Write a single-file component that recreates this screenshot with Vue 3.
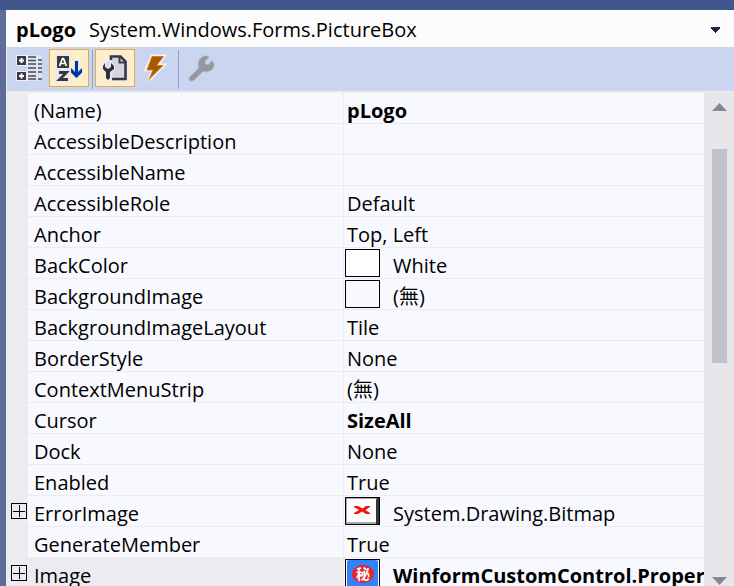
<script setup>
import { ref } from 'vue'

const sortMode = ref('alpha')

const rows = [
  { name: '(Name)', value: 'pLogo', bold: true },
  { name: 'AccessibleDescription', value: '' },
  { name: 'AccessibleName', value: '' },
  { name: 'AccessibleRole', value: 'Default' },
  { name: 'Anchor', value: 'Top, Left' },
  { name: 'BackColor', value: 'White', preview: 'white' },
  { name: 'BackgroundImage', value: '(無)', preview: 'empty' },
  { name: 'BackgroundImageLayout', value: 'Tile' },
  { name: 'BorderStyle', value: 'None' },
  { name: 'ContextMenuStrip', value: '(無)' },
  { name: 'Cursor', value: 'SizeAll', bold: true },
  { name: 'Dock', value: 'None' },
  { name: 'Enabled', value: 'True' },
  { name: 'ErrorImage', value: 'System.Drawing.Bitmap', preview: 'error', expandable: true },
  { name: 'GenerateMember', value: 'True' },
  { name: 'Image', value: 'WinformCustomControl.Propert', bold: true, preview: 'logo', expandable: true, selected: true }
]
</script>

<template>
  <main class="window">
    <div class="frame-top"></div>
    <div class="frame-left"></div>
    <section class="panel">
      <header class="object-bar">
        <strong>pLogo</strong>
        <span class="type">System.Windows.Forms.PictureBox</span>
        <button class="drop" aria-label="Select object">
          <svg width="9" height="6" viewBox="0 0 9 6" shape-rendering="crispEdges"><path d="M0 0H9V1.500L4.500 6L0 1.500Z" fill="#1b293e" /></svg>
        </button>
      </header>

      <nav class="toolbar">
        <button class="tool" :class="{ on: sortMode === 'category' }" aria-label="Categorized" @click="sortMode = 'category'">
          <svg width="28" height="28" viewBox="0 0 28 28">
            <g fill="#edf1fb"><rect x="1" y="1" width="12" height="11" /><rect x="1" y="17" width="12" height="10" /><rect x="12" y="1" width="15" height="26" opacity=".55" /></g>
            <g fill="#3b3b3f"><rect x="2" y="2" width="9" height="9" /><rect x="2" y="18" width="9" height="8" /></g>
            <path d="M4 6.500H9M6.500 4V9M4 22H9M6.500 19.500V24.500" stroke="#fff" stroke-width="2" />
            <path d="M13 3H21M13 6.500H21M13 10H21M13 14H21M13 18H21M13 22H21M13 25H21M23 6H27M23 10H27M23 14H27M23 18H27M23 25H27" stroke="#4a4b50" stroke-width="1.500" />
          </svg>
        </button>
        <button class="tool" :class="{ on: sortMode === 'alpha' }" aria-label="Alphabetical" @click="sortMode = 'alpha'">
          <svg width="28" height="28" viewBox="0 0 28 28">
            <path d="M1 0H15V15H14V28H1Z" fill="#e3e9f9" />
            <rect x="2" y="2" width="12" height="12" fill="#38383d" />
            <path d="M4.500 12L7.500 4.500H8.500L11.500 12M6 9.500H10" fill="none" stroke="#fff" stroke-width="1.700" />
            <path d="M4 18.500H11.500L4.500 25.500H13" fill="none" stroke="#38383d" stroke-width="2.800" />
            <path d="M21.500 6V22M17 15V17L21.500 21.500L26 17V15" fill="none" stroke="#d9e5fb" stroke-width="5" />
            <path d="M20 7H23V18L27 14V18.500L21.500 24L16 18.500V14L20 18Z" fill="#00379c" />
          </svg>
        </button>
        <i class="sep"></i>
        <button class="tool on" aria-label="Properties">
          <svg width="28" height="28" viewBox="0 0 28 28">
            <path d="M11 1H19L26 8V26H9V22L4 18V8L8 6Z" fill="#d9dcf4" stroke="#e4e8fb" stroke-width="2" />
            <path d="M10 6V2.500H19.500L24.500 7.500V25H11" fill="none" stroke="#38383d" stroke-width="2.600" />
            <path d="M12 4H17V10H23V23H12Z" fill="#d5d6dc" />
            <path d="M18.500 2V8.500H25" fill="none" stroke="#38383d" stroke-width="2" />
            <path d="M4 9L2 12V15L5 18V24L7 26L9 24V18L13 15V12L10 9V13L7 15L4 13Z" fill="#303035" stroke="#e8eafc" stroke-width="2" paint-order="stroke" />
          </svg>
        </button>
        <button class="tool" aria-label="Events">
          <svg width="28" height="28" viewBox="0 0 28 28">
            <path d="M11 2H23L17 11H23L8 26L12 16H5Z" fill="#f5f6fb" stroke="#f5f6fb" stroke-width="3" />
            <path d="M11 2.500H22.500L15.500 11.500H22L8 25.500L12 16H6Z" fill="#a15b00" stroke="#e27b17" stroke-width="1" />
          </svg>
        </button>
        <i class="sep"></i>
        <button class="tool" disabled aria-label="Property pages">
          <svg width="28" height="28" viewBox="0 0 28 28">
            <path d="M3 23L12 14C10 8 13 2 20 2L22 3L18 7V10L21 11L25 7L27 10C27 16 21 19 16 17L7 26C4 28 1 26 3 23Z" fill="#94979f" stroke="#c4c8d2" stroke-width="2" paint-order="stroke" />
          </svg>
        </button>
      </nav>

      <div class="body">
        <div class="scroller">
          <table class="grid">
            <colgroup><col class="c-gutter"><col class="c-name"><col></colgroup>
            <tbody>
              <tr v-for="row in rows" :key="row.name" :class="{ selected: row.selected }">
                <td class="gutter">
                  <button v-if="row.expandable" class="expand" :aria-label="'Expand ' + row.name">
                    <svg width="16" height="16" viewBox="0 0 16 16" shape-rendering="crispEdges"><path d="M.5 .5H15.500V15.500H.5ZM2 8.500H14M8.500 2V14" fill="none" stroke="#000" /></svg>
                  </button>
                </td>
                <th scope="row">{{ row.name }}</th>
                <td class="value">
                  <div class="cell">
                    <span v-if="row.preview" class="preview" :class="row.preview">
                      <svg v-if="row.preview === 'error'" width="33" height="26" viewBox="0 0 33 26">
                        <rect width="33" height="26" fill="#aaa" />
                        <rect x="1" y="1" width="29" height="23" fill="#fdfdfd" />
                        <path d="M31 0H33V26H30V2Z" fill="#333" />
                        <path d="M8 8H12L16.500 10.500L20 8H24V9L19.500 12L24 15V16H20L16 13.500L12 16H8V15L13 12L8 9Z" fill="#f31313" />
                      </svg>
                      <svg v-if="row.preview === 'logo'" width="33" height="26" viewBox="0 0 33 26">
                        <rect width="33" height="26" fill="#fff" />
                        <rect x="1" width="31" height="30" rx="2" fill="#3282fa" />
                        <ellipse cx="17" cy="14" rx="11" ry="9" fill="#e32630" />
                        <text x="17" y="19" text-anchor="middle" class="seal">秘</text>
                      </svg>
                    </span>
                    <span :class="{ bold: row.bold }">{{ row.value }}</span>
                  </div>
                </td>
              </tr>
            </tbody>
          </table>
        </div>
        <div class="scrollbar">
          <button aria-label="Scroll up"><svg width="15" height="8" viewBox="0 0 15 8"><path d="M7.500 0L15 8H0Z" fill="#868999" /></svg></button>
          <div class="track"><div class="thumb"></div></div>
          <button aria-label="Scroll down"><svg width="15" height="8" viewBox="0 0 15 8"><path d="M0 0H15L7.500 8Z" fill="#868999" /></svg></button>
        </div>
      </div>
    </section>
  </main>
</template>

<style>
body { margin: 0; }
</style>

<style scoped>
* { box-sizing: border-box; }
.window {
  display: grid;
  grid-template: 10px minmax(0, 1fr) / 6px minmax(0, 1fr);
  height: 100vh;
  overflow: hidden;
  background: #ebebf0;
  color: #000;
  font: 20px/30px "Open Sans", "Noto Sans CJK TC", sans-serif;
}
.frame-top { grid-column: 1 / -1; background: #41568c; }
.frame-left { background: #5f6c9b; }
.panel { display: flex; flex-direction: column; min-height: 0; }
button { display: flex; align-items: center; justify-content: center; padding: 0; border: 0; background: none; }
svg { display: block; flex: none; }
.object-bar {
  display: flex;
  align-items: center;
  gap: 13px;
  height: 37px;
  flex: none;
  padding: 2px 14px 0 10px;
  background: #fcfcfc;
}
.type { flex: 1; white-space: nowrap; }
.toolbar {
  display: flex;
  flex: none;
  height: 44px;
  margin-left: 1px;
  padding: 2px;
  background: #cad5ef;
}
.tool { width: 40px; height: 38px; border: 1px solid transparent; }
.tool.on { border-color: #d9ab5c; background: #ffecc8; }
.sep { width: 1px; height: 39px; margin: 1px 2px 0 3px; background: #8e9fca; }
.body { display: flex; flex: 1; min-height: 0; padding-top: 1px; }
.scroller { flex: 1; min-width: 0; padding-top: 1px; overflow: hidden; }
.grid { width: 100%; table-layout: fixed; border-collapse: separate; border-spacing: 0; }
.c-gutter { width: 22px; }
.c-name { width: 316px; }
.grid td, .grid th {
  height: 31px;
  padding: 0;
  text-align: left;
  font-weight: 400;
  white-space: nowrap;
  overflow: hidden;
  background: #f8f9ff;
  border-bottom: 1px solid #ebebf0;
}
.grid th { padding: 6px 0 0 6px; border-right: 1px solid #ebebf0; line-height: 24px; }
.grid .gutter { background: #ebebf0; padding-left: 5px; }
.grid .selected th { background: #ebebf0; }
.cell { display: flex; gap: 13px; height: 30px; padding: 6px 0 0 3px; line-height: 24px; }
.preview { width: 35px; height: 28px; margin: -5px 0 0 -2px; border: 1px solid #000; flex: none; overflow: hidden; }
.white { background: #fff; }
.bold, strong { font-weight: 700; }
.seal { font: 700 14px "Noto Sans CJK TC", sans-serif; fill: #fff; }
.scrollbar {
  display: flex;
  flex-direction: column;
  align-items: center;
  width: 30px;
  padding: 11px 0 1px;
  background: #e7e6eb;
}
.track { flex: 1; width: 15px; padding-top: 38px; }
.thumb { height: 50%; background: #c2c3c9; }
</style>
